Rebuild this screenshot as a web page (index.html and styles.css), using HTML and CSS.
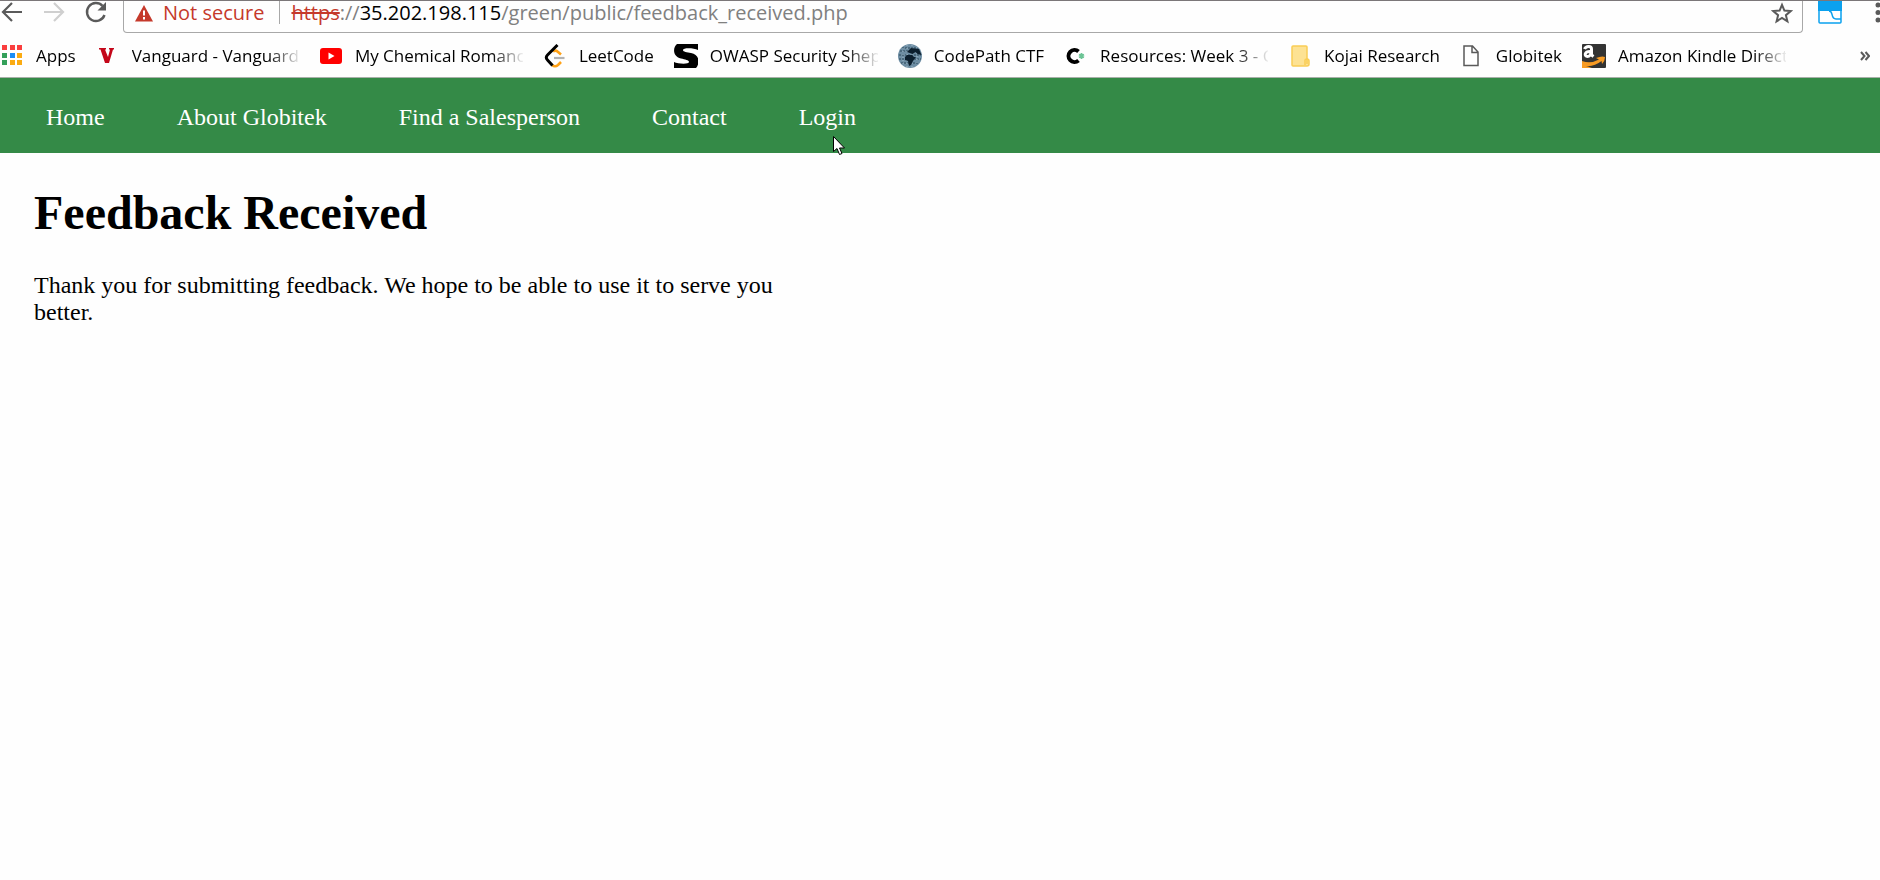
FILE: index.html
```html
<!DOCTYPE html>
<html lang="en">
<head>
<meta charset="utf-8">
<title>Feedback Received</title>
<link rel="stylesheet" href="styles.css">
</head>
<body>
<div class="chrome">
  <div class="toolbar">
    <div class="controls">
      <button class="tool" aria-label="Back"><svg width="24" height="24" viewBox="0 0 24 24" fill="none" stroke="#5a5a5a" stroke-width="2.200"><path d="M22 12H4M12 3l-9 9 9 9"/></svg></button>
      <button class="tool" aria-label="Forward"><svg width="24" height="24" viewBox="0 0 24 24" fill="none" stroke="#cfcfcf" stroke-width="2.200"><path d="M2 12h18M12 3l9 9-9 9"/></svg></button>
      <button class="tool" aria-label="Reload"><svg width="24" height="24" viewBox="0 0 24 24" fill="none" stroke="#5a5a5a" stroke-width="2.400"><path d="M20.500 15A9 9 0 1 1 18.500 5.800"/><path d="M22 2v8.500h-8.500z" fill="#5a5a5a" stroke="none"/></svg></button>
    </div>
    <div class="omnibox">
      <button class="security"><svg width="18" height="18" viewBox="0 0 18 18"><path d="M9 1l9 16.500H0z" fill="#c5392b"/><path d="M9 6.500v5M9 13v2.500" stroke="#fff" stroke-width="2"/></svg>Not secure</button>
      <div class="url" role="textbox" aria-label="Address"><span class="scheme">https</span>://<span class="host">35.202.198.115</span>/green/public/feedback_received.php</div>
      <button class="star" aria-label="Bookmark this page"><svg width="22" height="22" viewBox="0 0 22 22" fill="none" stroke="#5a5a5a" stroke-width="2"><path d="M11 2.800l2.400 5.800 6.300.5-4.800 4.100 1.500 6.100-5.400-3.300-5.400 3.300 1.500-6.100-4.800-4.100 6.300-.5z"/></svg></button>
    </div>
    <button class="extension" aria-label="Extension"><svg width="24" height="24" viewBox="0 0 24 24"><rect x="1" y="1" width="22" height="22" rx="1" fill="#fff" stroke="#0ba1ee" stroke-width="1.500"/><path d="M0 0h24v11H0z" fill="#0ba1ee"/><path d="M11 11c5 0 1 8 7 8h5" fill="none" stroke="#0ba1ee" stroke-width="1.500"/></svg></button>
    <button class="more" aria-label="Menu"><svg width="5" height="24" viewBox="0 0 5 24" fill="#5a5a5a"><circle cx="3" cy="5" r="2.500"/><circle cx="3" cy="12.500" r="2.500"/><circle cx="3" cy="20" r="2.500"/></svg></button>
  </div>
  <nav class="bookmarks" aria-label="Bookmarks">
    <a class="bookmark" href="#"><svg class="icon" viewBox="0 0 24 24"><path d="M2 1h5v5H2zM10 1h5v5h-5zM17 1h5v5h-5z" fill="#fa3e3e"/><path d="M2 9h5v5H2zM2 16h5v5H2z" fill="#34a05a"/><path d="M10 9h5v5h-5z" fill="#1a8cf5"/><path d="M17 9h5v5h-5zM10 16h5v5h-5zM17 16h5v5h-5z" fill="#fbab12"/></svg><span class="label">Apps</span></a>
    <a class="bookmark" href="#"><svg class="icon" viewBox="0 0 24 24"><path d="M3 4h7v1.500H9L12 13l2-7.500h-1V4h5v1.500h-1L13 19H9L4.500 5.500H3z" fill="#c4071a"/></svg><span class="label">Vanguard - Vanguard</span></a>
    <a class="bookmark" href="#"><svg class="icon" viewBox="0 0 24 24"><rect x="1" y="4" width="22" height="16" rx="3" fill="#f00"/><path d="M9.500 8.500l6 3.500-6 3.500z" fill="#fff"/></svg><span class="label">My Chemical Romanc</span></a>
    <a class="bookmark" href="#"><svg class="icon" viewBox="0 0 24 24" fill="none" stroke-width="2.600"><path d="M10 7.500q2.500-1.800 4.500 0l3.500 3M9 21q3 2.500 6 0l3-3" stroke="#ffa116"/><path d="M11 14h10.500" stroke="#b3b3b3" stroke-width="2.200"/><path d="M14.500 1L4.500 11q-2.500 2.500 0 5L9.500 21.500" stroke="#000" stroke-width="3"/></svg><span class="label">LeetCode</span></a>
    <a class="bookmark" href="#"><svg class="icon" viewBox="0 0 24 24"><path d="M24 0v6C20 4 9 3.500 9 6c0 2 4 2 8 3 9 2 9 10 5 15H0v-6c4 2 15 2.500 15 0 0-2-4-2.500-8-3.500C-2 12-1 3 3 0z"/></svg><span class="label">OWASP Security Shep</span></a>
    <a class="bookmark" href="#"><svg class="icon" viewBox="0 0 24 24"><circle cx="12" cy="12" r="12" fill="#6d8da3"/><path d="M4 4h16M2 7h19M1 11h22M1 15h22M3 19h18" stroke="#2b4658" stroke-dasharray="2 1"/><path d="M5 4v16M9 1v22M14 1v22M19 3v18" stroke="#a0b8c8" stroke-dasharray="1 2"/><path d="M9 8l4-4 8 1 2.500 6-4-1-2-2-3 2zM7 13l2-2 5 0 2 2h2l-3 4-2 4-2 1-1-5-3-1z" fill="#0c1f2e"/></svg><span class="label">CodePath CTF</span></a>
    <a class="bookmark" href="#"><svg class="icon" viewBox="0 0 24 24" fill="none"><path d="M14.500 7.500A6 6 0 1 0 14.500 16.500" stroke="#000" stroke-width="4"/><path d="M17.500 9v6M15 10.500l5 3M20 10.500l-5 3" stroke="#6cc495" stroke-width="1.800"/></svg><span class="label">Resources: Week 3 - C</span></a>
    <a class="bookmark" href="#"><svg class="icon" viewBox="0 0 24 24" fill="#fde293" stroke="#f9cd55" stroke-width="1.500"><path d="M5 2h13q1 0 1 1v12q2 0 2 2v3q0 2-2 2H5q-1 0-1-1V3q0-1 1-1z"/><path d="M17 21v-5q0-1 2-1v5"/></svg><span class="label">Kojai Research</span></a>
    <a class="bookmark" href="#"><svg class="icon" viewBox="0 0 24 24" fill="#fff" stroke="#5a5a5a" stroke-width="1.500"><path d="M4 2h8.500L18 8v13.500H4zM12 2v6.500h6"/></svg><span class="label">Globitek</span></a>
    <a class="bookmark" href="#"><svg class="icon" viewBox="0 0 24 24" fill="none"><rect width="24" height="24" rx="1" fill="#333"/><path d="M2.500 5C4 1.500 9.500 1.500 9.500 5v6l2 1.500M9 7.500c-7-.5-7 5-3.500 5 2 0 3.500-2 3.500-4" stroke="#fff" stroke-width="3"/><path d="M0 17q9 3 17-1.500L14 14q6-2.500 9-1 0 4-3 7l-.5-3Q12 23 4 22l6 2H0z" fill="#f79b24"/></svg><span class="label">Amazon Kindle Direct</span></a>
    <button class="overflow" aria-label="More bookmarks"><svg width="10" height="10" viewBox="0 0 10 10" fill="none" stroke="#5a5a5a" stroke-width="2"><path d="M1 1l3.500 4L1 9M5.500 1L9 5 5.500 9"/></svg></button>
  </nav>
</div>
<nav class="site-nav" aria-label="Main">
  <a href="#">Home</a>
  <a href="#">About Globitek</a>
  <a href="#">Find a Salesperson</a>
  <a href="#">Contact</a>
  <a class="current" href="#">Login<svg class="pointer" width="13" height="20" viewBox="0 0 13 20"><path d="M.5.500v15l3.500-3 2.500 6 2.500-1-2.500-5.500h5z" fill="#fff" stroke="#000"/></svg></a>
</nav>
<main class="content">
  <h1>Feedback Received</h1>
  <p>Thank you for submitting feedback. We hope to be able to use it to serve you better.</p>
</main>
</body>
</html>
```
FILE: styles.css
```css
body {
  margin: 0;
  background: #fefefe;
  color: #000;
  font: 24px/27px "Liberation Serif", "Times New Roman", serif;
}
a { color: inherit; text-decoration: none; }
button {
  display: flex;
  align-items: center;
  padding: 0;
  border: 0;
  background: none;
  color: inherit;
  font: inherit;
}
svg { display: block; flex: none; }

.chrome {
  border-top: 1px solid #7b7779;
  border-bottom: 1px solid #a9b0a9;
  font-family: "Open Sans", "Noto Sans", sans-serif;
  overflow: hidden;
}
.toolbar { display: flex; height: 32px; }
.controls {
  display: flex;
  gap: 18px;
  width: 123px;
  height: 22px;
}
.tool { height: 22px; }
.omnibox {
  display: flex;
  flex: 1;
  box-sizing: border-box;
  height: 32px;
  padding: 0 9px 8px 11px;
  border: 1px solid #a8a8a8;
  border-top: 0;
  border-radius: 0 0 4px 4px;
  font-size: 20px;
  line-height: 24px;
}
.security {
  gap: 10px;
  margin-right: 11px;
  padding-right: 15px;
  border-right: 1px solid #a8a8a8;
  color: #c5392b;
}
.url {
  flex: 1;
  color: #808080;
  white-space: nowrap;
}
.scheme { color: #c5392b; text-decoration: line-through; }
.host { color: #000; }
.extension { height: 22px; margin-left: 15px; }
.more { height: 22px; margin-left: 33px; }

.bookmarks {
  display: flex;
  align-items: center;
  gap: 20px;
  padding: 11px 10px 9px 0;
  font-size: 17px;
  line-height: 24px;
}
.bookmark { display: flex; align-items: center; gap: 12px; }
.icon { width: 24px; height: 24px; }
.label {
  max-width: 168px;
  overflow: hidden;
  white-space: nowrap;
  mask-image: linear-gradient(to right, #000 136px, transparent 170px);
}
.overflow { margin-left: auto; }

.site-nav {
  display: flex;
  gap: 72px;
  padding: 26px 46px 22px;
  background: #348a47;
  color: #fff;
}
.current { position: relative; }
.pointer { position: absolute; top: 32px; left: 34px; }

.content { display: flow-root; max-width: 750px; padding: 0 34px; }
h1 {
  margin: 32px 0;
  font-size: 48px;
  line-height: 55px;
}
p { margin: 0; }
```
